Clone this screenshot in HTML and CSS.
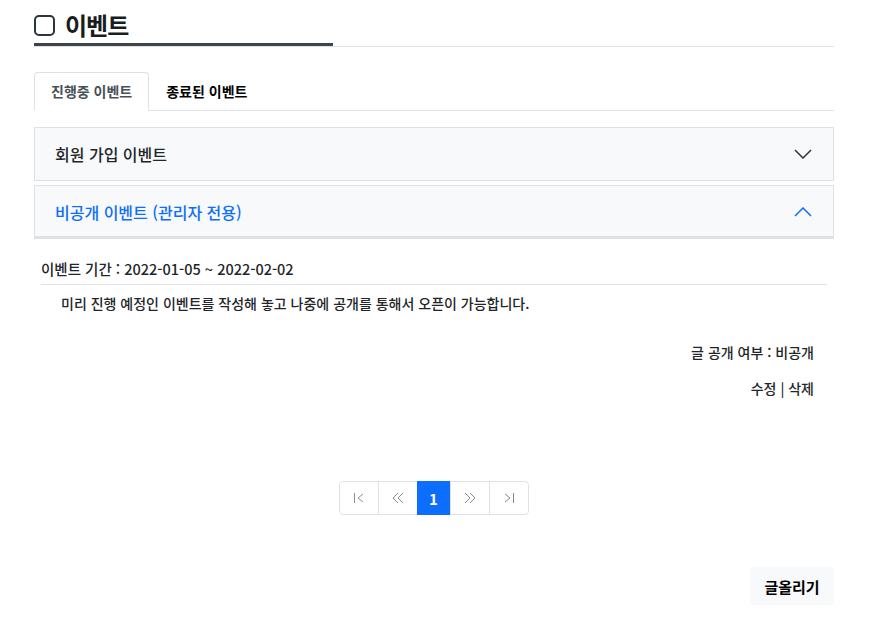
FILE: index.html
```html
<!DOCTYPE html>
<html lang="ko">
<head>
    <meta charset="UTF-8">
    <title>이벤트</title>
    <link rel="stylesheet" href="styles.css">
</head>
<body>
    <div class="container">
        <div class="page-title">
            <h2><span class="box"></span>이벤트</h2>
        </div>

        <ul class="tabs">
            <li class="tab active">진행중 이벤트</li>
            <li class="tab">종료된 이벤트</li>
        </ul>

        <div class="accordion">
            <div class="acc-item">
                <div class="acc-header">
                    <span>회원 가입 이벤트</span>
                    <svg class="chevron" width="18" height="10" viewBox="0 0 18 10"><path d="M1 1 L9 9 L17 1" fill="none" stroke="#333" stroke-width="1.5"/></svg>
                </div>
            </div>
            <div class="acc-item open">
                <div class="acc-header">
                    <span>비공개 이벤트 (관리자 전용)</span>
                    <svg class="chevron" width="18" height="10" viewBox="0 0 18 10"><path d="M1 9 L9 1 L17 9" fill="none" stroke="#0d6efd" stroke-width="1.5"/></svg>
                </div>
                <div class="acc-body">
                    <div class="period">이벤트 기간 : 2022-01-05 ~ 2022-02-02</div>
                    <p class="desc">미리 진행 예정인 이벤트를 작성해 놓고 나중에 공개를 통해서 오픈이 가능합니다.</p>
                    <div class="meta">글 공개 여부 : 비공개</div>
                    <div class="meta actions">수정 | 삭제</div>
                </div>
            </div>
        </div>

        <ul class="pagination">
            <li><svg width="12" height="12" viewBox="0 0 12 12"><path d="M1.5 1 V11 M10 2 L5 6 L10 10" fill="none" stroke="#8a8f96" stroke-width="1"/></svg></li>
            <li><svg width="14" height="12" viewBox="0 0 14 12"><path d="M7 1 L2 6 L7 11 M12 1 L7 6 L12 11" fill="none" stroke="#8a8f96" stroke-width="1"/></svg></li>
            <li class="current">1</li>
            <li><svg width="14" height="12" viewBox="0 0 14 12"><path d="M2 1 L7 6 L2 11 M7 1 L12 6 L7 11" fill="none" stroke="#8a8f96" stroke-width="1"/></svg></li>
            <li><svg width="12" height="12" viewBox="0 0 12 12"><path d="M2 2 L7 6 L2 10 M10.5 1 V11" fill="none" stroke="#9a7f8c" stroke-width="1"/></svg></li>
        </ul>

        <div class="bottom">
            <button type="button">글올리기</button>
        </div>
    </div>
</body>
</html>
```

FILE: styles.css
```css
body {
    margin: 0;
    font-family: "Noto Sans CJK KR", "Noto Sans", sans-serif;
    color: #212529;
    background: #fff;
}

.container {
    width: 800px;
    margin: 0 0 0 34px;
    padding-top: 7px;
}

.page-title {
    border-bottom: 1px solid #dee2e6;
}

.page-title h2 {
    display: flex;
    align-items: center;
    width: 299px;
    margin: 0;
    font-size: 24px;
    font-weight: bold;
    line-height: 36px;
    letter-spacing: -1px;
    color: #1a1d20;
    border-bottom: 3px solid #3f444a;
}

.box {
    width: 17px;
    height: 17px;
    border: 2px solid #2b3440;
    border-radius: 5px;
    margin-right: 10px;
}

.tabs {
    list-style: none;
    display: flex;
    margin: 25px 0 0;
    padding: 0;
    border-bottom: 1px solid #dee2e6;
}

.tab {
    padding: 0 16px;
    height: 37px;
    line-height: 37px;
    font-size: 14px;
    font-weight: bold;
    color: #000;
    margin-bottom: -1px;
    border: 1px solid transparent;
    border-radius: 4px 4px 0 0;
    white-space: nowrap;
}

.tab.active {
    color: #495057;
    background: #fff;
    border-color: #dee2e6 #dee2e6 #fff;
}

.accordion {
    margin-top: 16px;
}

.acc-item {
    margin-bottom: 4px;
}

.acc-header {
    display: flex;
    justify-content: space-between;
    align-items: center;
    height: 52px;
    padding: 0 21px 0 20px;
    background: #f8f9fa;
    border: 1px solid #dee2e6;
    font-size: 16px;
    font-weight: 500;
}

.open .acc-header {
    color: #0d6efd;
    box-shadow: inset 0 -2px 0 #dee2e6;
}

.acc-body {
    padding: 19px 7px 0;
}

.period {
    font-size: 14.5px;
    font-weight: 500;
    padding-bottom: 5px;
    border-bottom: 1px solid #dee2e6;
}

.desc {
    margin: 8px 0 0 20px;
    font-size: 14px;
    font-weight: 500;
}

.meta {
    text-align: right;
    font-size: 14px;
    font-weight: 500;
    margin-right: 13px;
    margin-top: 29px;
}

.actions {
    margin-top: 16px;
}

.pagination {
    list-style: none;
    display: flex;
    justify-content: center;
    margin: 83px 0 0;
    padding: 0;
}

.pagination li {
    display: flex;
    align-items: center;
    justify-content: center;
    width: 38px;
    height: 32px;
    font-size: 15px;
    font-weight: bold;
    color: #6c757d;
    border: 1px solid #dee2e6;
    margin-left: -1px;
}

.pagination li:first-child {
    border-radius: 4px 0 0 4px;
}

.pagination li:last-child {
    border-radius: 0 4px 4px 0;
}

.pagination .current {
    width: 32px;
    background: #0d6efd;
    border-color: #0d6efd;
    color: #fff;
}

.bottom {
    display: flex;
    justify-content: flex-end;
    margin-top: 52px;
}

.bottom button {
    font-family: inherit;
    font-size: 15px;
    font-weight: bold;
    color: #000;
    background: #f8f9fa;
    border: none;
    border-radius: 4px;
    width: 84px;
    height: 38px;
}
```
